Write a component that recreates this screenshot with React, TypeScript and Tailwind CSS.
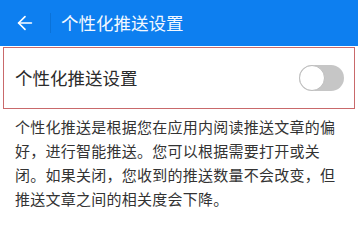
import { ArrowLeft } from "lucide-react";

function App() {
  return (
    <div
      className="w-[358px] h-[234px] bg-white overflow-hidden"
      style={{ fontFamily: '"Noto Sans CJK SC", "Noto Sans", sans-serif' }}
    >
      {/* header */}
      <div className="h-[46px] bg-[#0d7ff0] flex items-center">
        <div className="w-[50px] flex justify-center">
          <ArrowLeft className="w-[22px] h-[22px] text-white" strokeWidth={1.8} />
        </div>
        <div className="w-px h-[20px] bg-[#0a72d8]" />
        <span className="ml-[10px] text-[17.5px] text-[#f2f8ff] leading-none">个性化推送设置</span>
      </div>

      {/* setting row */}
      <div className="mx-[3px] mt-[1px] h-[62px] border border-[#c9696b] flex items-center justify-between pl-[11px] pr-[10px]">
        <span className="text-[17.5px] text-[#2b2b2b] leading-none">个性化推送设置</span>
        <div className="w-[45px] h-[26px] rounded-full bg-[#c6c6c6] flex items-center">
          <div className="w-[26px] h-[26px] rounded-full bg-white border border-[#bdbdbd]" />
        </div>
      </div>

      {/* description */}
      <p className="px-[15px] pt-[6px] text-[15px] leading-[24px] tracking-[0.25px] text-[#333333]">
        个性化推送是根据您在应用内阅读推送文章的偏
        <br />
        好，进行智能推送。您可以根据需要打开或关
        <br />
        闭。如果关闭，您收到的推送数量不会改变，但
        <br />
        推送文章之间的相关度会下降。
      </p>
    </div>
  );
}

export default App;
